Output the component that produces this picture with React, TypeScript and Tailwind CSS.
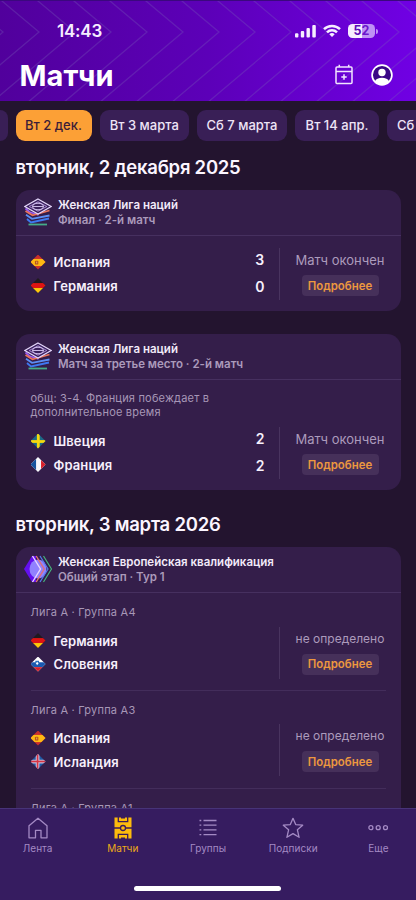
import React from "react";

type Country = "es" | "de" | "se" | "fr" | "si" | "is";

const names: Record<Country, string> = {
  es: "Испания",
  de: "Германия",
  se: "Швеция",
  fr: "Франция",
  si: "Словения",
  is: "Исландия",
};

function FlagArt({ code }: { code: Country }) {
  switch (code) {
    case "es":
      return (
        <>
          <rect width="16" height="16" fill="#c92f2c" />
          <rect y="4.2" width="16" height="7.6" fill="#fdb913" />
          <rect x="4.2" y="6" width="3.6" height="4.2" rx="1" fill="#b5541c" />
          <rect x="5.3" y="7" width="1.4" height="2" fill="#e3a04a" />
        </>
      );
    case "de":
      return (
        <>
          <rect width="16" height="16" fill="#201a1e" />
          <rect y="5.4" width="16" height="5.4" fill="#dd1414" />
          <rect y="10.7" width="16" height="5.3" fill="#fdc80c" />
        </>
      );
    case "se":
      return (
        <>
          <rect width="16" height="16" fill="#1c6a86" />
          <rect x="6.3" width="3" height="16" fill="#f6d80e" />
          <rect y="6.5" width="16" height="3" fill="#f6d80e" />
        </>
      );
    case "fr":
      return (
        <>
          <rect width="16" height="16" fill="#f8f8fc" />
          <rect width="5.4" height="16" fill="#17549f" />
          <rect x="10.7" width="5.3" height="16" fill="#d9202b" />
        </>
      );
    case "si":
      return (
        <>
          <rect width="16" height="16" fill="#fff" />
          <rect y="5.6" width="16" height="5.2" fill="#1b59b0" />
          <rect y="10.8" width="16" height="5.2" fill="#d4202c" />
          <path d="M4.6 4h4v3.2l-2 1.8-2-1.8z" fill="#2b70bd" />
          <path d="M5.2 7l1.4-2 1.4 2-1.4 1.4z" fill="#fff" />
        </>
      );
    case "is":
      return (
        <>
          <rect width="16" height="16" fill="#1d5ba6" />
          <path d="M5 0h4v6h7v4H9v6H5v-6H0V6h5z" fill="#c9b4d0" />
          <path d="M6.200 0h1.600v7.200H16v1.600H7.800V16H6.200V8.800H0V7.200h6.200z" fill="#d53443" />
        </>
      );
  }
}

function Flag({ code }: { code: Country }) {
  return (
    <svg viewBox="0 0 16 16" className="h-[15px] w-[15px] shrink-0 [clip-path:polygon(50%_0,100%_50%,50%_100%,0_50%)]">
      <FlagArt code={code} />
    </svg>
  );
}

function NationsLogo() {
  return (
    <svg viewBox="0 0 28 28" className="h-7 w-7 shrink-0" fill="none">
      <g strokeWidth="1.8">
        <path d="M1.500 10.500L5.500 14l9 3" stroke="#9a5cf0" />
        <path d="M1.500 13L8.500 17.300 25.500 12.500" stroke="#e8735c" />
        <path d="M2 16.800L8 20.800 25.500 17.500" stroke="#5b8ef5" />
        <path d="M3 21l4 3.500L25 20.500" stroke="#3e78f0" />
        <path d="M4.500 26.500h18.500" stroke="#45ac88" />
      </g>
      <path d="M14 1L27.200 8.500 14 16 .800 8.500z" fill="#39205c" stroke="#e4d6fb" strokeWidth="1.200" />
      <path d="M14 3.800L22.800 8.500 14 13.200 5.200 8.500z" stroke="#b296dd" strokeWidth="0.900" />
      <ellipse cx="14" cy="8.500" rx="5.500" ry="3.300" stroke="#d9c8f5" strokeWidth="1" />
      <path d="M8.500 8.500h11" stroke="#d9c8f5" strokeWidth="0.900" />
    </svg>
  );
}

function QualifyingLogo() {
  return (
    <svg viewBox="0 0 28 28" className="h-7 w-7 shrink-0" fill="none">
      <path d="M8 1L0 14l8 13h4V1z" fill="#6410ee" />
      <ellipse cx="14" cy="14" rx="8.500" ry="9.500" fill="#9181ff" />
      <path d="M19.500 1l8 13-8 13" stroke="#46b47b" strokeWidth="1.200" />
      <path d="M16 1l8 13-8 13" stroke="#527dee" strokeWidth="1.200" />
      <path d="M12.200 1l8 13-8 13" stroke="#e17177" strokeWidth="1.400" />
      <path d="M8.500 1l8 13-8 13" stroke="#e9d4ff" strokeWidth="1.400" />
    </svg>
  );
}

function CardHeader({ logo, title, stage }: { logo: React.ReactNode; title: string; stage: string }) {
  return (
    <div className="flex h-[46px] shrink-0 items-center gap-[6px] border-b border-[#46305f] pb-[2px] pl-[8.500px]">
      {logo}
      <div className="flex flex-col pt-[2px] text-[11.500px] leading-[15px] font-semibold whitespace-nowrap">
        <span className="text-[#f2eaf9]">{title}</span>
        <span className="text-[#ab9abb]">{stage}</span>
      </div>
    </div>
  );
}

function Match({ home, away, score, status, statusClass }: { home: Country; away: Country; score?: [number, number]; status: string; statusClass: string }) {
  return (
    <div className="flex h-[52px] pl-[15px]">
      <div className="flex flex-col gap-[3.500px] pt-[4px]">
        {[home, away].map((c) => (
          <div key={c} className="flex h-5 items-center gap-2">
            <Flag code={c} />
            <span className="text-[13px] leading-5 font-semibold tracking-[0.1px] text-[#f7f0fc]">{names[c]}</span>
          </div>
        ))}
      </div>
      <div className="-mt-[2px] ml-auto flex flex-col pr-[14px] text-[14px] leading-[27px] font-semibold text-[#f7f0fc]">
        {score?.map((s, i) => (
          <span key={i}>{s}</span>
        ))}
      </div>
      <div className="flex w-[122px] flex-col items-center border-l border-[#49345f]">
        <span className={`mt-[2px] leading-5 whitespace-nowrap text-[#ac9bbc] ${statusClass}`}>{status}</span>
        <button className="mt-[5px] h-[21px] w-[77px] rounded-[4px] bg-[#46305a] text-[11.400px] leading-[20px] font-semibold text-[#ed983f]">
          Подробнее
        </button>
      </div>
    </div>
  );
}

function GroupLabel({ children }: { children: string }) {
  return <div className="h-5 text-[11px] leading-5 tracking-[0.23px] text-[#a797b7]">{children}</div>;
}

function Header() {
  return (
    <header className="relative h-[101px] shrink-0 overflow-hidden border-t border-[#3b087e] bg-linear-to-r from-[#51009c] via-[#5c00b8] to-[#7000e4]">
      <svg className="absolute inset-0" width="416" height="100" fill="none" stroke="#7a62b8" strokeOpacity="0.3" strokeWidth="1.300">
        {Array.from({ length: 16 }, (_, i) => 3 + i * 36).map((x) => (
          <path key={x} d={`M${x - 43} -5L${x} 31L${x - 84} 102`} />
        ))}
      </svg>
      <div className="relative flex h-[60px] items-center justify-between pr-[38px] pl-[57px]">
        <span className="text-[17px] leading-none font-semibold tracking-[-0.200px] text-[#f6edff]">14:43</span>
        <div className="flex items-center gap-[7px]">
          <svg width="21" height="14" viewBox="0 0 21 14" fill="#f6edff">
            <rect x="0" y="9.200" width="3.400" height="4.300" rx="1" />
            <rect x="5.800" y="7" width="3.400" height="6.500" rx="1" />
            <rect x="11.500" y="4" width="3.400" height="9.500" rx="1" />
            <rect x="17.300" y="1" width="3.500" height="12.500" rx="1" />
          </svg>
          <svg width="18" height="14" viewBox="0 0 18 14" fill="none" stroke="#f6edff" strokeWidth="2.500">
            <path d="M1 5.200a11.400 11.400 0 0 1 16 0" />
            <path d="M4 8.400a7.100 7.100 0 0 1 10 0" />
            <path d="M9 13L6.300 10.200a3.900 3.900 0 0 1 5.400 0z" fill="#f6edff" stroke="none" />
          </svg>
          <div className="flex items-center gap-[1px]">
            <div className="flex h-[14px] w-[27px] items-center justify-center rounded-[4.500px] bg-linear-to-r from-[#f6edff] from-52% to-[#bf91f5] to-52% text-[12.500px] leading-none font-bold">
              <span className="text-[#5c0bb8]">5</span>
              <span className="text-[#6c16cc]">2</span>
            </div>
            <div className="h-[5px] w-[2px] rounded-r-full bg-[#bf91f5]" />
          </div>
        </div>
      </div>
      <div className="relative flex h-[27px] items-center justify-between pr-[23px] pl-[19.500px]">
        <h1 className="pt-[2px] text-[29px] leading-none font-bold tracking-[0.100px] text-white">Матчи</h1>
        <div className="flex items-center gap-[17px]">
          <svg width="20" height="21" viewBox="0 0 20 21" fill="none" stroke="#f2e5ff" strokeWidth="1.500">
            <rect x="2" y="3" width="16" height="16.500" rx="1" />
            <path d="M2 7.500h16M5.300 0.800V3M14.700 0.800V3M10 10.300v5.400M7.300 13h5.400" />
          </svg>
          <svg width="22" height="22" viewBox="0 0 22 22">
            <circle cx="11" cy="11" r="9.800" fill="#3a0786" />
            <circle cx="11" cy="8.500" r="3.700" fill="#fff" />
            <path d="M3.800 17.500c1.800-5 12.600-5 14.400 0-3 4.500-11.400 4.500-14.400 0z" fill="#fff" />
            <circle cx="11" cy="11" r="9.900" fill="none" stroke="#fff" strokeWidth="1.700" />
          </svg>
        </div>
      </div>
    </header>
  );
}

function Chip({ text, box }: { text: string; box: string }) {
  return (
    <div className={`flex h-[31px] shrink-0 items-center rounded-[9px] text-[13px] font-medium whitespace-nowrap ${box}`}>{text}</div>
  );
}

function PitchIcon() {
  return (
    <svg width="18" height="22" viewBox="0 0 18 22">
      <rect x="0.500" y="0.500" width="17" height="21" fill="#fdbb0c" />
      <g fill="none" stroke="#3a1b5c" strokeWidth="1.300">
        <path d="M4.300 0v4.700h9.400V0M4.300 22v-4.700h9.400V22M0 11h6.400M11.600 11H18" />
        <path d="M7 0.700h4M7 21.300h4" strokeWidth="1.600" />
        <circle cx="9" cy="11" r="2.500" />
      </g>
    </svg>
  );
}

const line = { fill: "none", stroke: "#a48ac4", strokeWidth: 1.3 };

const tabs = [
  {
    label: "Лента",
    tone: "text-[#a48ac4]",
    icon: (
      <svg width="20" height="22" viewBox="0 0 20 22" {...line} strokeLinejoin="round">
        <path d="M1 8.800L10 1.200l9 7.600V20.800h-6V13.300H7.500v7.500H1z" />
      </svg>
    ),
  },
  { label: "Матчи", tone: "text-[#edaa18]", icon: <PitchIcon /> },
  {
    label: "Группы",
    tone: "text-[#a48ac4]",
    icon: (
      <svg width="18" height="22" viewBox="0 0 18 22" {...line}>
        <path d="M4.500 3.500H17.500M4.500 8.200H17.500M4.500 12.900H17.500M4.500 17.600H17.500" />
        <path d="M0.500 3.500H2.300M0.500 8.200H2.300M0.500 12.900H2.300M0.500 17.600H2.300" />
      </svg>
    ),
  },
  {
    label: "Подписки",
    tone: "text-[#a48ac4]",
    icon: (
      <svg width="22" height="22" viewBox="0 0 22 22" {...line} strokeLinejoin="round">
        <path d="M11 1.300l2.700 6.300 7 .6-5.300 4.600 1.700 7.500L11 16.600l-6.100 3.700 1.700-7.500L1.300 8.200l7-.6z" />
      </svg>
    ),
  },
  {
    label: "Еще",
    tone: "text-[#a48ac4]",
    icon: (
      <svg width="20" height="22" viewBox="0 0 20 22" {...line}>
        <circle cx="2.900" cy="10.700" r="2" />
        <circle cx="10.200" cy="10.700" r="2" />
        <circle cx="17.500" cy="10.700" r="2" />
      </svg>
    ),
  },
];

function TabBar() {
  return (
    <nav className="flex h-[92px] shrink-0 flex-col border-t border-[#473378] bg-[#361c60]">
      <div className="-mx-[5px] grid h-[77px] grid-cols-5 pt-[7.500px]">
        {tabs.map((t) => (
          <div key={t.label} className={`flex flex-col items-center gap-px text-[10px] leading-[16px] tracking-[0.050px] ${t.tone}`}>
            {t.icon}
            <span>{t.label}</span>
          </div>
        ))}
      </div>
      <div className="ml-[134px] h-[5px] w-[147px] rounded-full bg-white" />
    </nav>
  );
}

export default function App() {
  return (
    <div className="flex h-[900px] w-[416px] flex-col overflow-hidden bg-[#23142f] font-['Inter','Noto_Sans',sans-serif]">
      <Header />
      <main className="flex min-h-0 flex-1 flex-col overflow-hidden">
        <div className="mt-[9px] flex shrink-0 gap-2 overflow-hidden">
          <Chip text="" box="w-2 -mr-[0.500px] rounded-l-none bg-[#391f56]" />
          <Chip text="Вт 2 дек." box="w-[76px] justify-center bg-[#fca036] text-[#3c1d38]" />
          <Chip text="Вт 3 марта" box="w-[89.500px] justify-center bg-[#391f56] text-[#eee4f6]" />
          <Chip text="Сб 7 марта" box="w-[90px] justify-center bg-[#391f56] text-[#eee4f6]" />
          <Chip text="Вт 14 апр." box="w-[84px] justify-center bg-[#391f56] text-[#eee4f6]" />
          <Chip text="Сб 18 апр." box="w-[84px] pl-[10px] bg-[#391f56] text-[#eee4f6]" />
        </div>
        <div className="flex flex-col px-[15.500px]">
          <h2 className="mt-[12px] h-[30px] text-[18.500px] leading-[28px] font-semibold tracking-[-0.250px] text-[#fbf5ff]">
            вторник, 2 декабря 2025
          </h2>
          <section className="mt-[7px] flex h-[121px] shrink-0 flex-col rounded-[14px] bg-[#341e4a]">
            <CardHeader logo={<NationsLogo />} title="Женская Лига наций" stage="Финал · 2-й матч" />
            <div className="pt-[12px]">
              <Match home="es" away="de" score={[3, 0]} status="Матч окончен" statusClass="text-[13px]" />
            </div>
          </section>
          <section className="mt-[23px] flex h-[156px] shrink-0 flex-col rounded-[14px] bg-[#341e4a]">
            <CardHeader logo={<NationsLogo />} title="Женская Лига наций" stage="Матч за третье место · 2-й матч" />
            <p className="mt-[12px] ml-[15px] w-[210px] text-[11px] leading-[13.500px] tracking-[0.2px] text-[#a797b7]">
              общ: 3-4. Франция побеждает в дополнительное время
            </p>
            <div className="pt-[8px]">
              <Match home="se" away="fr" score={[2, 2]} status="Матч окончен" statusClass="text-[13px]" />
            </div>
          </section>
          <h2 className="mt-[20px] h-[30px] text-[18.500px] leading-[28px] font-semibold tracking-[-0.250px] text-[#fbf5ff]">
            вторник, 3 марта 2026
          </h2>
          <section className="mt-[7px] flex h-[320px] shrink-0 flex-col rounded-t-[14px] bg-[#341e4a]">
            <CardHeader logo={<QualifyingLogo />} title="Женская Европейская квалификация" stage="Общий этап · Тур 1" />
            <div className="mx-[15px] flex h-[98px] flex-col border-b border-[#432d5b] pt-[9px]">
              <GroupLabel>Лига A · Группа A4</GroupLabel>
              <div className="-mx-[15px] pt-[4.500px]">
                <Match home="de" away="si" status="не определено" statusClass="text-[12px]" />
              </div>
            </div>
            <div className="mx-[15px] flex h-[98px] flex-col border-b border-[#432d5b] pt-[9px]">
              <GroupLabel>Лига A · Группа A3</GroupLabel>
              <div className="-mx-[15px] pt-[4px]">
                <Match home="es" away="is" status="не определено" statusClass="text-[12px]" />
              </div>
            </div>
            <div className="mx-[15px] pt-[9px]">
              <GroupLabel>Лига A · Группа A1</GroupLabel>
            </div>
          </section>
        </div>
      </main>
      <TabBar />
    </div>
  );
}
